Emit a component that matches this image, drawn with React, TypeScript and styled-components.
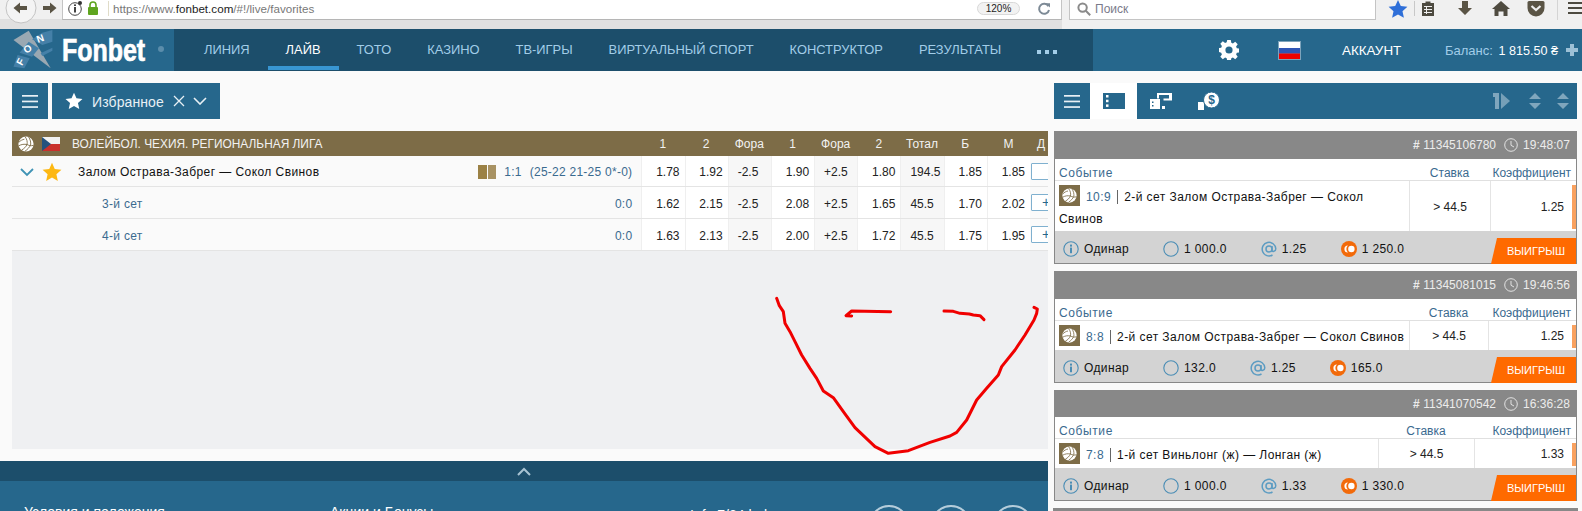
import React from "react";
import styled, { createGlobalStyle } from "styled-components";

const Global = createGlobalStyle`
  html, body { margin: 0; padding: 0; height: 511px; overflow: hidden; background: #fafafa; }
  body { font-family: "Liberation Sans", Arial, sans-serif; font-size: 12px; color: #222; }
  * { box-sizing: border-box; }
`;

const Page = styled.div`
  width: 1582px;
  height: 511px;
  overflow: hidden;
  position: relative;
  display: flex;
  flex-direction: column;
`;

/* ---------- browser chrome ---------- */
const Chrome = styled.div`
  height: 29px;
  display: flex;
  flex: none;
`;
const ChromeLeft = styled.div`
  width: 1062px;
  background: linear-gradient(#f0f0f0 0 19px, #e0e0e0 19px);
  display: flex;
  align-items: flex-start;
`;
const ChromeRight = styled.div`
  flex: 1;
  background: #f0f0f0;
  display: flex;
  align-items: flex-start;
  padding-left: 7px;
`;
const NavButtons = styled.svg`
  width: 62px;
  height: 29px;
  flex: none;
  overflow: visible;
`;
const UrlBox = styled.div`
  flex: 1;
  height: 20px;
  background: #fff;
  border-left: 1px solid #c4c4c4;
  border-right: 1px solid #c4c4c4;
  border-bottom: 1px solid #b5b5b5;
  display: flex;
  align-items: center;
  padding: 0 7px 2px 5px;
`;
const SiteIcons = styled.svg`
  width: 40px;
  height: 17px;
  flex: none;
`;
const UrlDivider = styled.span`
  width: 1px;
  height: 15px;
  background: #e0dcc8;
  margin-right: 4px;
`;
const UrlText = styled.span`
  flex: 1;
  font-size: 11.6px;
  color: #777;
  letter-spacing: 0.02px;
  b { font-weight: 400; color: #222; }
`;
const ZoomPill = styled.span`
  width: 43px;
  height: 13px;
  border: 1px solid #d8d8d8;
  border-radius: 7px;
  background: #f2f2f2;
  font-size: 10px;
  line-height: 11px;
  text-align: center;
  color: #222;
`;
const ReloadIcon = styled.svg`
  width: 14px;
  height: 14px;
  margin-left: 17px;
  margin-right: 3px;
  border: none;
`;
const SearchBox = styled.div`
  width: 307px;
  height: 20px;
  background: #fff;
  border: 1px solid #c4c4c4;
  border-top: none;
  display: flex;
  align-items: center;
  gap: 4px;
  padding: 0 0 2px 7px;
  font-size: 12px;
  color: #7a7a8a;
`;
const ToolIcons = styled.svg`
  width: 206px;
  height: 20px;
  flex: none;
`;

/* ---------- site nav ---------- */
const Nav = styled.div`
  height: 42px;
  flex: none;
  background: #26678c;
  display: flex;
  align-items: stretch;
`;
const LogoBlock = styled.div`
  width: 174px;
  flex: none;
  position: relative;
  display: flex;
  align-items: center;
  padding-left: 13px;
`;
const LogoMark = styled.svg`
  width: 40px;
  height: 40px;
  flex: none;
`;
const LogoText = styled.span`
  font-size: 32px;
  font-weight: 700;
  color: #fff;
  margin-left: 9px;
  display: inline-block;
  transform: scaleX(0.78);
  transform-origin: left center;
  -webkit-text-stroke: 0.7px #fff;
  line-height: 42px;
`;
const LogoDot = styled.span`
  position: absolute;
  left: 158px;
  top: 17px;
  width: 6px;
  height: 6px;
  border-radius: 50%;
  background: #5b8dab;
`;
const Menu = styled.div`
  width: 919px;
  flex: none;
  background: #1c4e6b;
  display: flex;
  padding-left: 12px;
`;
const MenuItem = styled.div<{ $active?: boolean }>`
  padding: 0 18px;
  height: 41px;
  line-height: 41px;
  font-size: 12.9px;
  white-space: nowrap;
  color: ${(p) => (p.$active ? "#fff" : "#a2cde8")};
  border-bottom: 4px solid ${(p) => (p.$active ? "#3896d2" : "transparent")};
`;
const MenuDots = styled.div`
  display: flex;
  gap: 4px;
  align-items: center;
  padding: 4px 0 0 18px;
  i { width: 4px; height: 4px; background: #a2cde8; display: block; }
`;
const Account = styled.div`
  flex: 1;
  display: flex;
  align-items: center;
  position: relative;
  padding-left: 126px;
`;
const Flag = styled.svg`
  width: 23px;
  height: 19px;
  margin-left: 39px;
  flex: none;
`;
const AccountLink = styled.span`
  color: #fff;
  font-size: 13.4px;
  margin-left: 41px;
  width: 103px;
`;
const Balance = styled.span`
  color: #a2cde8;
  font-size: 13px;
  white-space: nowrap;
  b { font-weight: 400; color: #fff; margin-left: 2px; font-size: 12.6px; }
`;
const Plus = styled.span`
  position: absolute;
  right: 4px;
  top: 15px;
  width: 12px;
  height: 12px;
  background:
    linear-gradient(#9cc0d6, #9cc0d6) center / 12px 4px no-repeat,
    linear-gradient(#9cc0d6, #9cc0d6) center / 4px 12px no-repeat;
`;

/* ---------- body ---------- */
const Body = styled.div`
  flex: 1;
  display: flex;
  min-height: 0;
`;
const LeftCol = styled.div`
  width: 1048px;
  flex: none;
  display: flex;
  flex-direction: column;
`;
const RightCol = styled.div`
  width: 523px;
  flex: none;
  margin-left: 6px;
  padding-top: 12px;
  display: flex;
  flex-direction: column;
`;
const LeftInner = styled.div`
  height: 378px;
  flex: none;
  padding: 12px 0 0 12px;
  display: flex;
  flex-direction: column;
`;
const FilterBar = styled.div`
  display: flex;
  gap: 4px;
  height: 36px;
  flex: none;
  margin-bottom: 12px;
`;
const SquareBtn = styled.div`
  width: 36px;
  background: #26678c;
  display: flex;
  align-items: center;
  justify-content: center;
`;
const FilterBtn = styled.div`
  width: 168px;
  background: #26678c;
  color: #e8f0f5;
  font-size: 14px;
  display: flex;
  align-items: center;
  padding-left: 13px;
  gap: 0;
  span { margin-left: 9px; width: 81px; white-space: nowrap; padding-top: 1px; letter-spacing: 0.1px; }
`;
const Panel = styled.div`
  flex: 1;
  background: #eff0f2;
  overflow: hidden;
  position: relative;
`;
const Row = styled.div<{ $h: number; $head?: boolean }>`
  height: ${(p) => p.$h}px;
  display: grid;
  grid-template-columns: 1fr repeat(9, 43.2px) 18px;
  background: ${(p) => (p.$head ? "#7d6c47" : "#fafafa")};
  border-bottom: ${(p) => (p.$head ? "none" : "1px solid #e4e4e4")};
  color: ${(p) => (p.$head ? "#f2f2f2" : "#222")};
`;
const HeadTitle = styled.div`
  display: flex;
  align-items: center;
  padding-left: 6px;
  white-space: nowrap;
`;
const LeagueName = styled.span`
  margin-left: 12px;
  font-size: 11.9px;
  padding-top: 1px;
`;
const MiniFlag = styled.svg`
  width: 18px;
  height: 14px;
  margin-left: 8px;
`;
const HeadCell = styled.div`
  text-align: center;
  line-height: 26px;
  overflow: hidden;
  white-space: nowrap;
`;
const NameCell = styled.div`
  display: flex;
  align-items: center;
  white-space: nowrap;
  padding: 2px 9px 0 0;
`;
const Chevron = styled.svg`
  width: 14px;
  height: 10px;
  margin-left: 8px;
`;
const GoldStar = styled.svg`
  width: 20px;
  height: 20px;
  margin-left: 8px;
`;
const MatchName = styled.span`
  margin-left: 16px;
  flex: 1;
  color: #111;
  letter-spacing: 0.43px;
`;
const SetName = styled.span`
  margin-left: 90px;
  flex: 1;
  color: #3a6a8f;
  letter-spacing: 0.3px;
`;
const ScoreBars = styled.span`
  display: flex;
  gap: 1px;
  margin-right: 8px;
  i { width: 8.5px; height: 14px; background: #9b8145; display: block; }
  i + i { background: #a89263; }
`;
const Score = styled.span`
  color: #3a6a8f;
  letter-spacing: 0.25px;
  & + & { margin-left: 8px; }
`;
const OddCell = styled.div<{ $param?: boolean }>`
  display: flex;
  align-items: center;
  justify-content: ${(p) => (p.$param ? "flex-start" : "flex-end")};
  padding: ${(p) => (p.$param ? "2px 0 0 9px" : "2px 5px 0 0")};
  background: ${(p) => (p.$param ? "#f7f7f7" : "#fff")};
  border-left: 1px solid #efefef;
  color: #222;
`;
const AddCell = styled.div`
  background: #fafafa;
  overflow: hidden;
  display: flex;
  align-items: center;
`;
const AddBtn = styled.div`
  width: 30px;
  height: 17px;
  margin-left: 1px;
  flex: none;
  background: #fff;
  border: 1px solid #7fb0cf;
  border-radius: 1px;
  color: #26678c;
  font-size: 14px;
  line-height: 14px;
  padding-left: 10px;
`;
const Drawing = styled.svg`
  position: absolute;
  left: 760px;
  top: 285px;
  width: 290px;
  height: 175px;
  pointer-events: none;
  z-index: 5;
`;

/* ---------- footer ---------- */
const FooterBar = styled.div`
  margin-top: 12px;
  height: 20px;
  flex: none;
  background: #1c4e6b;
  display: flex;
  align-items: center;
  justify-content: center;
`;
const Footer = styled.div`
  flex: 1;
  background: #26678c;
  display: flex;
  padding: 23px 0 0 24px;
  color: #fff;
  font-size: 14px;
  white-space: nowrap;
  align-items: flex-start;
`;
const FooterLink = styled.span<{ $w: number; $drop?: number }>`
  width: ${(p) => p.$w}px;
  flex: none;
  margin-top: ${(p) => p.$drop ?? 0}px;
`;
const RoundBtn = styled.span`
  width: 40px;
  height: 40px;
  border-radius: 50%;
  border: 2px solid #b5cddb;
  margin: 1px 22px 0 0;
  flex: none;
`;

/* ---------- bet slip ---------- */
const SlipBar = styled.div`
  height: 36px;
  flex: none;
  background: #26678c;
  display: flex;
  align-items: center;
  margin-bottom: 12px;
`;
const SlipTab = styled.div<{ $active?: boolean; $w: number }>`
  width: ${(p) => p.$w}px;
  height: 100%;
  background: ${(p) => (p.$active ? "#fff" : "transparent")};
  display: flex;
  align-items: center;
  justify-content: center;
`;
const SlipTools = styled.svg`
  width: 90px;
  height: 36px;
  margin-left: auto;
  margin-right: 0;
`;
const Card = styled.div`
  border: 1px solid #888;
  border-top: none;
  margin-bottom: 7px;
  flex: none;
  background: #fff;
`;
const CardHead = styled.div<{ $h?: number }>`
  height: ${(p) => p.$h ?? 28}px;
  margin: 0 -1px;
  flex: none;
  background: #888;
  color: #ececec;
  display: flex;
  align-items: center;
  justify-content: flex-end;
  padding-right: 7px;
  letter-spacing: 0.03px;
  b { font-weight: 700; }
`;
const ClockIcon = styled.svg`
  width: 14px;
  height: 14px;
  margin: 0 5px 0 8px;
`;
const Columns = styled.div<{ $cols: string }>`
  display: grid;
  grid-template-columns: ${(p) => p.$cols};
`;
const Labels = styled(Columns)`
  height: 22px;
  align-items: end;
  color: #3a6a8f;
  border-bottom: 1px solid #e0e0e0;
`;
const LabelEvent = styled.span`
  padding-left: 4px;
  letter-spacing: 0.6px;
`;
const LabelStake = styled.span`
  text-align: center;
`;
const LabelOdd = styled.span`
  text-align: right;
  padding-right: 5px;
`;
const EventCell = styled.div`
  padding: 5px 4px 1px;
  min-height: 29px;
  line-height: 22px;
  color: #111;
  letter-spacing: 0.44px;
`;
const EventIcon = styled.span`
  display: inline-flex;
  align-items: center;
  justify-content: center;
  width: 21px;
  height: 21px;
  margin: -1px 6px 0 0;
  background: #7d6c47;
  vertical-align: top;
`;
const EventScore = styled.span`
  color: #3a6a8f;
  padding-right: 6px;
  margin-right: 6px;
  border-right: 1px solid #666;
`;
const StakeCell = styled.div`
  border-left: 1px solid #e4e4e4;
  display: flex;
  align-items: center;
  justify-content: center;
  padding-top: 1px;
`;
const OddValue = styled.div`
  border-left: 1px solid #e4e4e4;
  display: flex;
  align-items: center;
  justify-content: flex-end;
  padding: 1px 12px 0 0;
  position: relative;
  &::after {
    content: "";
    position: absolute;
    right: 0;
    top: 4px;
    bottom: 2px;
    width: 4px;
    background: #f9a15f;
  }
`;
const CardFoot = styled.div`
  height: 32px;
  background: #d3d3d3;
  display: flex;
  align-items: center;
  padding: 4px 0 0 8px;
  color: #111;
`;
const FootItem = styled.span`
  display: flex;
  align-items: center;
  gap: 5px;
  margin-right: 34px;
  letter-spacing: 0.38px;
  svg { flex: none; }
`;
const WinBtn = styled.div`
  margin: 0 0 -1px auto;
  align-self: flex-end;
  width: 85px;
  height: 26px;
  background: #ff6a00;
  clip-path: polygon(6px 0, 100% 0, 100% 100%, 0 100%);
  color: #fff;
  font-size: 11px;
  line-height: 27px;
  padding-left: 16px;
`;

/* ---------- drawings ---------- */
const Ball = ({ size = 16, line = "#7d6c47" }: { size?: number; line?: string }) => (
  <svg width={size} height={size} viewBox="0 0 16 16">
    <circle cx="8" cy="8" r="7.6" fill="#fff" />
    <g fill="none" stroke={line} strokeWidth="0.9">
      <path d="M7 .6C9 3.2 9.6 6 9 8.5" />
      <path d="M10.6 1C12.4 3.6 13 6.4 12.6 9" />
      <path d="M9 8.5C6.4 8 3.4 8.2 .8 9.8" />
      <path d="M9 8.5C8 10.8 6 12.8 3.6 14" />
      <path d="M12.6 9C11.4 11.4 9.6 13.4 7 15.2" />
      <path d="M9 8.5C11 9.6 13 10 15.4 9.4" />
      <path d="M6.4 3.2C4.4 3.6 2.4 4.6 1 6.2" />
    </g>
  </svg>
);

const Burger = () => (
  <svg width="16" height="13" viewBox="0 0 16 13" fill="#e8f0f5">
    <rect y="0" width="16" height="1.7" />
    <rect y="5.6" width="16" height="1.7" />
    <rect y="11.2" width="16" height="1.7" />
  </svg>
);

const Star = ({ fill }: { fill: string }) => (
  <svg width="18" height="18" viewBox="0 0 24 24">
    <path fill={fill} d="M12 1l3.3 7.4 8 .9-6 5.4 1.7 8L12 18.6 5 22.7l1.7-8-6-5.4 8-.9z" />
  </svg>
);

const InfoIcon = () => (
  <svg width="16" height="16" viewBox="0 0 16 16">
    <circle cx="8" cy="8" r="7.2" fill="none" stroke="#4a8db5" strokeWidth="1.1" />
    <rect x="7" y="6.6" width="2" height="5.6" fill="#4a8db5" />
    <rect x="7" y="3.6" width="2" height="2" fill="#4a8db5" />
  </svg>
);
const RingIcon = () => (
  <svg width="16" height="16" viewBox="0 0 16 16">
    <circle cx="8" cy="8" r="7.2" fill="none" stroke="#4a8db5" strokeWidth="1.1" />
  </svg>
);
const AtIcon = () => (
  <svg width="16" height="16" viewBox="0 0 16 16" fill="none" stroke="#5c9cc2" strokeWidth="1.5">
    <circle cx="8" cy="8" r="3" />
    <path d="M11 5v4.4c0 1.6 3.8 1.4 3.8-1.6A6.800 6.800 0 1 0 11.500 14" />
  </svg>
);
const CoinIcon = () => (
  <svg width="16" height="16" viewBox="0 0 16 16">
    <circle cx="8" cy="8" r="8" fill="#f26a0a" />
    <circle cx="10.4" cy="8" r="3.2" fill="#fff" />
    <path d="M7 4.4a3.600 3.600 0 1 0 0 7.200 4.800 4.800 0 0 1 0-7.200z" fill="#fff" />
  </svg>
);

type Bet = {
  id: string;
  time: string;
  score: string;
  event: string;
  odd: string;
  sum: string;
  win: string;
  cols: string;
  head: number;
};

const bets: Bet[] = [
  { id: "11345106780", time: "19:48:07", score: "10:9", event: "2-й сет Залом Острава-Забрег — Сокол Свинов", odd: "1.25", sum: "1 000.0", win: "1 250.0", cols: "354px 81px 86px", head: 28 },
  { id: "11345081015", time: "19:46:56", score: "8:8", event: "2-й сет Залом Острава-Забрег — Сокол Свинов", odd: "1.25", sum: "132.0", win: "165.0", cols: "354px 79px 88px", head: 28 },
  { id: "11341070542", time: "16:36:28", score: "7:8", event: "1-й сет Виньлонг (ж) — Лонган (ж)", odd: "1.33", sum: "1 000.0", win: "1 330.0", cols: "323px 96px 102px", head: 27 },
];

const BetCard = ({ b }: { b: Bet }) => (
  <Card>
    <CardHead $h={b.head}>
      <b>#</b>
      <span>&nbsp;{b.id}</span>
      <ClockIcon viewBox="0 0 14 14" fill="none" stroke="#ececec" strokeWidth="0.9">
        <circle cx="7" cy="7" r="6.3" />
        <path d="M7 3v4.300l3 1.700" />
      </ClockIcon>
      <span>{b.time}</span>
    </CardHead>
    <Labels $cols={b.cols}>
      <LabelEvent>Событие</LabelEvent>
      <LabelStake>Ставка</LabelStake>
      <LabelOdd>Коэффициент</LabelOdd>
    </Labels>
    <Columns $cols={b.cols}>
      <EventCell>
        <EventIcon>
          <Ball size={15} />
        </EventIcon>
        <EventScore>{b.score}</EventScore>
        {b.event}
      </EventCell>
      <StakeCell>&gt; 44.5</StakeCell>
      <OddValue>{b.odd}</OddValue>
    </Columns>
    <CardFoot>
      <FootItem>
        <InfoIcon />
        Одинар
      </FootItem>
      <FootItem>
        <RingIcon />
        {b.sum}
      </FootItem>
      <FootItem>
        <AtIcon />
        {b.odd}
      </FootItem>
      <FootItem>
        <CoinIcon />
        {b.win}
      </FootItem>
      <WinBtn>ВЫИГРЫШ</WinBtn>
    </CardFoot>
  </Card>
);

const Matches = [
  { name: "3-й сет", score: "0:0", v: ["1.62", "2.15", "-2.5", "2.08", "+2.5", "1.65", "45.5", "1.70", "2.02"], h: 32 },
  { name: "4-й сет", score: "0:0", v: ["1.63", "2.13", "-2.5", "2.00", "+2.5", "1.72", "45.5", "1.75", "1.95"], h: 32 },
];
const mainOdds = ["1.78", "1.92", "-2.5", "1.90", "+2.5", "1.80", "194.5", "1.85", "1.85"];
const heads = ["1", "2", "Фора", "1", "Фора", "2", "Тотал", "Б", "М"];
const isParam = (i: number) => i === 2 || i === 4 || i === 6;

const menu = ["ЛИНИЯ", "ЛАЙВ", "ТОТО", "КАЗИНО", "ТВ-ИГРЫ", "ВИРТУАЛЬНЫЙ СПОРТ", "КОНСТРУКТОР", "РЕЗУЛЬТАТЫ"];

const pt = (l: number[][]) => l.map((p) => `${p[0] / 3},${p[1] / 3}`).join(" ");

export default function App() {
  return (
    <Page>
      <Global />
      <Chrome>
        <ChromeLeft>
          <NavButtons viewBox="0 0 62 29">
            <circle cx="21" cy="8" r="15" fill="#f4f4f4" stroke="#c4c4c4" />
            <path d="M27 6h-7V2.500l-6.500 5.500 6.500 5.500V10h7z" fill="#5a5445" />
            <path d="M43 6h7V2.500l6.500 5.500-6.500 5.500V10h-7z" fill="#5a5445" />
          </NavButtons>
          <UrlBox>
            <SiteIcons viewBox="0 0 40 17">
              <circle cx="7" cy="9" r="6.3" fill="none" stroke="#444" strokeWidth="1" />
              <rect x="6" y="7" width="2" height="5.5" fill="#444" />
              <rect x="6" y="4.4" width="2" height="1.6" fill="#444" />
              <circle cx="12" cy="3" r="2" fill="#333" />
              <rect x="20" y="7" width="10" height="8" rx="1" fill="#5fa51f" />
              <path d="M22 7V5a3 3 0 0 1 6 0v2" fill="none" stroke="#5fa51f" strokeWidth="1.6" />
            </SiteIcons>
            <UrlDivider />
            <UrlText>
              https://www.<b>fonbet.com</b>/#!/live/favorites
            </UrlText>
            <ZoomPill>120%</ZoomPill>
            <ReloadIcon viewBox="0 0 14 14" fill="none" stroke="#7d8a96" strokeWidth="2">
              <path d="M11.4 4.2A5 5 0 1 0 12 8" />
              <path d="M8.4 1.2h4.6v4.4z" fill="#7d8a96" stroke="none" />
            </ReloadIcon>
          </UrlBox>
        </ChromeLeft>
        <ChromeRight>
          <SearchBox>
            <svg width="14" height="14" viewBox="0 0 14 14" fill="none" stroke="#8a8a8a" strokeWidth="2">
              <circle cx="5.6" cy="5.6" r="4.2" />
              <path d="M8.8 8.8l4.4 4.4" />
            </svg>
            Поиск
          </SearchBox>
          <ToolIcons viewBox="0 0 206 20">
            <path fill="#2f6fd8" d="M22 0l2.800 6 6.600.8-4.900 4.500 1.400 6.500L22 14.500l-5.900 3.300 1.400-6.500-4.900-4.500 6.600-.8z" />
            <rect x="38" y="1" width="1" height="15" fill="#c8c8c8" />
            <path d="M46 3h3.500V1.500h5V3H58v13H46z" fill="#4d4a40" />
            <path d="M48 6.500h8M48 9.500h8M48 12.500h8M50.500 6v8" stroke="#efefef" strokeWidth="1" />
            <path d="M86 1h6v7h4l-7 7-7-7h4z" fill="#5a5445" />
            <path d="M125 1l9 8h-2.500v7h-4v-4.500h-5V16h-4V9H116z" fill="#4f4b40" />
            <path d="M153 1h14a1.500 1.500 0 0 1 1.500 1.500V8a8.500 8.500 0 0 1-17 0V2.500A1.500 1.500 0 0 1 153 1z" fill="#5a5445" />
            <path d="M155.500 6l4.500 4 4.500-4" fill="none" stroke="#efefef" strokeWidth="2.200" />
            <rect x="181" y="0" width="1" height="26" fill="#d4d4d4" />
            <path d="M192 3h14M192 8h14M192 13h14" stroke="#4d4a40" strokeWidth="2" />
          </ToolIcons>
        </ChromeRight>
      </Chrome>

      <Nav>
        <LogoBlock>
          <LogoMark viewBox="0 0 40 40">
            <path d="M.5 10 15.700.7 37.700 38.300z" fill="#9aa8b2" />
            <g fill="#4580a8">
              <path d="M.5 36.700 4.600 25l12.100 3.300-5.400 10z" />
              <path d="M6.600 22.700 15.700 11.700l10.200 6.600L19 26.700z" />
              <path d="M19 9.300 29.300 2.700 39.400 0v11.700L29.300 15z" />
              <path d="M27.600 23.300 39.400 17.700v3L29.300 26z" />
            </g>
            <text x="9" y="36" fontSize="10" fontWeight="700" fill="#fff" transform="rotate(-62 9 36)" fontFamily="Liberation Sans">F</text>
            <text x="14" y="24" fontSize="10" fontWeight="700" fill="#fff" transform="rotate(-42 14 24)" fontFamily="Liberation Sans">O</text>
            <text x="25" y="13" fontSize="10" fontWeight="700" fill="#fff" transform="rotate(-20 25 13)" fontFamily="Liberation Sans">N</text>
          </LogoMark>
          <LogoText>Fonbet</LogoText>
          <LogoDot />
        </LogoBlock>
        <Menu>
          {menu.map((m) => (
            <MenuItem key={m} $active={m === "ЛАЙВ"}>
              {m}
            </MenuItem>
          ))}
          <MenuDots>
            <i />
            <i />
            <i />
          </MenuDots>
        </Menu>
        <Account>
          <svg width="20" height="20" viewBox="0 0 20 20">
            <path
              fill="#fff"
              fillRule="evenodd"
              d="M8.200 0h3.600l.5 2.700 1.600.7 2.300-1.600 2.500 2.500-1.600 2.300.7 1.600 2.700.5v3.600l-2.700.5-.7 1.600 1.600 2.300-2.500 2.500-2.300-1.600-1.600.7-.5 2.700H8.200l-.5-2.700-1.600-.7-2.300 1.600-2.500-2.500 1.600-2.300-.7-1.600L-.5 11.800V8.200l2.700-.5.7-1.600L1.300 3.800l2.500-2.500 2.300 1.600 1.600-.7zM10 6.400a3.600 3.600 0 1 0 0 7.200 3.600 3.600 0 0 0 0-7.200z"
            />
          </svg>
          <Flag viewBox="0 0 23 19">
            <rect width="23" height="19" fill="#7da3bb" />
            <rect x="1" y="1" width="21" height="6" fill="#fff" />
            <rect x="1" y="7" width="21" height="5.500" fill="#2f55b5" />
            <rect x="1" y="12.500" width="21" height="5.500" fill="#ee0000" />
          </Flag>
          <AccountLink>АККАУНТ</AccountLink>
          <Balance>
            Баланс: <b>1 815.50 ₴</b>
          </Balance>
          <Plus />
        </Account>
      </Nav>

      <Body>
        <LeftCol>
          <LeftInner>
            <FilterBar>
              <SquareBtn>
                <Burger />
              </SquareBtn>
              <FilterBtn>
                <Star fill="#fff" />
                <span>Избранное</span>
                <svg width="12" height="12" viewBox="0 0 12 12" stroke="#e8f0f5" strokeWidth="1.300" fill="none">
                  <path d="M1 1l10 10M11 1L1 11" />
                </svg>
                <svg width="14" height="8" viewBox="0 0 14 8" stroke="#e8f0f5" strokeWidth="1.600" fill="none" style={{ marginLeft: 8 }}>
                  <path d="M1 1l6 6 6-6" />
                </svg>
              </FilterBtn>
            </FilterBar>
            <Panel>
              <Row $h={25} $head>
                <HeadTitle>
                  <Ball size={16} />
                  <MiniFlag viewBox="0 0 18 14">
                    <rect width="18" height="7" fill="#f1f1f1" />
                    <rect y="7" width="18" height="7" fill="#c9302c" />
                    <path d="M0 0l9 7-9 7z" fill="#24527e" />
                  </MiniFlag>
                  <LeagueName>ВОЛЕЙБОЛ. ЧЕХИЯ. РЕГИОНАЛЬНАЯ ЛИГА</LeagueName>
                </HeadTitle>
                {heads.map((h, i) => (
                  <HeadCell key={i}>{h}</HeadCell>
                ))}
                <HeadCell style={{ textAlign: "left", paddingLeft: 7 }}>Д</HeadCell>
              </Row>
              <Row $h={31}>
                <NameCell>
                  <Chevron viewBox="0 0 14 10" fill="none" stroke="#3f93b5" strokeWidth="1.800">
                    <path d="M1 2l6 6 6-6" />
                  </Chevron>
                  <GoldStar viewBox="0 0 24 24">
                    <path fill="#fdb813" d="M12 1l3.300 7.400 8 .9-6 5.400 1.700 8L12 18.600 5 22.700l1.700-8-6-5.400 8-.9z" />
                  </GoldStar>
                  <MatchName>Залом Острава-Забрег — Сокол Свинов</MatchName>
                  <ScoreBars>
                    <i />
                    <i />
                  </ScoreBars>
                  <Score>1:1</Score>
                  <Score>(25-22 21-25 0*-0)</Score>
                </NameCell>
                {mainOdds.map((v, i) => (
                  <OddCell key={i} $param={isParam(i)}>
                    {v}
                  </OddCell>
                ))}
                <AddCell>
                  <AddBtn />
                </AddCell>
              </Row>
              {Matches.map((m) => (
                <Row key={m.name} $h={m.h}>
                  <NameCell>
                    <SetName>{m.name}</SetName>
                    <Score>{m.score}</Score>
                  </NameCell>
                  {m.v.map((v, i) => (
                    <OddCell key={i} $param={isParam(i)}>
                      {v}
                    </OddCell>
                  ))}
                  <AddCell>
                    <AddBtn>+</AddBtn>
                  </AddCell>
                </Row>
              ))}
            </Panel>
          </LeftInner>
          <FooterBar>
            <svg width="14" height="9" viewBox="0 0 14 9" fill="none" stroke="#a8c3d3" strokeWidth="2">
              <path d="M1 8l6-6 6 6" />
            </svg>
          </FooterBar>
          <Footer>
            <FooterLink $w={306}>Условия и положения</FooterLink>
            <FooterLink $w={360}>Акции и Бонусы</FooterLink>
            <FooterLink $w={179} $drop={3}>Info 7/24 help</FooterLink>
            <RoundBtn />
            <RoundBtn />
            <RoundBtn />
          </Footer>
        </LeftCol>
        <RightCol>
          <SlipBar>
            <SlipTab $w={36}>
              <Burger />
            </SlipTab>
            <SlipTab $w={47} $active>
              <svg width="22" height="16" viewBox="0 0 22 16">
                <rect width="22" height="16" fill="#26678c" />
                <rect x="3" y="2" width="2.500" height="2.500" fill="#fff" />
                <rect x="3" y="6.700" width="2.500" height="2.500" fill="#fff" />
                <rect x="3" y="11.400" width="2.500" height="2.500" fill="#fff" />
              </svg>
            </SlipTab>
            <SlipTab $w={48}>
              <svg width="22" height="16" viewBox="0 0 22 16" fill="#fff">
                <path d="M7 0h15v7.500H13.500V5.500H19V2H9v3.500H7z" />
                <path fillRule="evenodd" d="M0 6h10v10H0zM2 8.500v1.500h1.500V8.500zM2 12v1.500h1.500V12z" />
                <rect x="12" y="13" width="3" height="3" />
              </svg>
            </SlipTab>
            <SlipTab $w={48}>
              <svg width="22" height="18" viewBox="0 0 22 18">
                <path d="M0 10h6v8H0z" fill="#fff" />
                <circle cx="13.500" cy="8" r="8" fill="#fff" stroke="#26678c" strokeWidth="1" />
                <text x="13.500" y="12" textAnchor="middle" fontSize="12" fontWeight="700" fill="#26678c" fontFamily="Liberation Sans">$</text>
              </svg>
            </SlipTab>
            <SlipTools viewBox="0 0 90 36">
              <path d="M6 10h6v16H8V14H6z" fill="#7fa6bd" />
              <path d="M14 10l9 8-9 8z" fill="#7fa6bd" opacity="0.9" />
              <path d="M42 16l6-6 6 6zM42 20h12l-6 6z" fill="#7fa6bd" />
              <path d="M70 16l6-6 6 6zM70 20h12l-6 6z" fill="#7fa6bd" />
            </SlipTools>
          </SlipBar>
          {bets.map((b) => (
            <BetCard key={b.id} b={b} />
          ))}
          <CardHead />
        </RightCol>
      </Body>

      <Drawing viewBox="0 0 290 175" fill="none" stroke="#f00000" strokeWidth="3" strokeLinecap="round" strokeLinejoin="round">
        <polyline points={pt([[50,40],[58,62],[70,80],[75,115],[90,140],[105,170],[125,210],[150,250],[170,280],[190,318],[220,338],[250,380],[285,428],[345,485],[385,505],[445,497],[510,472],[570,453],[590,442],[620,405],[650,345],[680,310],[715,270],[725,245],[765,195],[795,150],[822,105],[830,85],[832,72],[822,67]])} />
        <polyline points={pt([[392,80],[275,78],[258,92],[275,93]])} />
        <polyline points={pt([[552,78],[580,79],[600,85],[628,87],[640,90],[660,92],[672,104]])} />
      </Drawing>
    </Page>
  );
}
